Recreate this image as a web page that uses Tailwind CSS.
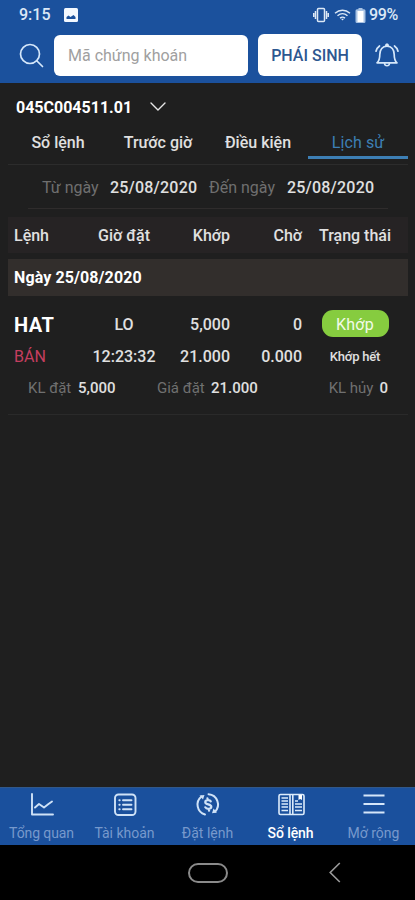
<!DOCTYPE html>
<html lang="vi">
<head>
    <meta charset="UTF-8">
    <meta name="viewport" content="width=device-width, initial-scale=1.0">
    <title>Sổ lệnh</title>
    <script src="https://cdn.jsdelivr.net/npm/@tailwindcss/browser@4"></script>
</head>
<body class="bg-[#1f1f1f] font-['Roboto',sans-serif] text-[#e0e0e0]">
    <div class="w-[415px] h-[900px] flex flex-col overflow-hidden">
        <header class="h-[83px] shrink-0 bg-[#1b519d]">
            <!-- Status bar -->
            <div class="h-[30px] flex items-center pl-[19px] pr-[18px] text-base font-medium text-[#dce8f6]">
                <span class="w-[45px]">9:15</span>
                <svg class="w-3.5 h-3.5" viewBox="0 0 14 14"><rect width="14" height="14" rx="1.500" fill="#f3f8ff"/><path d="M2.500 11V9l2-1.500 2 1.500L9.500 7l2 2v2z" fill="#1b519d"/></svg>
                <div class="ml-auto flex items-center">
                    <svg class="w-4 h-4" viewBox="0 0 16 16" fill="none" stroke="#dce8f6" stroke-width="1.500"><rect x="4.500" y="1.500" width="7" height="13" rx="1"/><path d="M2.500 4v8M.7 6v4M13.500 4v8M15.300 6v4"/></svg>
                    <svg class="w-[17px] h-3 ml-[5px]" viewBox="0 0 17 12" fill="none" stroke="#dce8f6" stroke-width="1.400"><path d="M1 4.200c4.500-4 10.500-4 15 0M3.500 6.800c3-2.600 7-2.600 10 0M6 9.100c1.500-1.200 3.500-1.200 5 0"/><path d="M7 9.800h3l-1.500 1.700z" fill="#dce8f6" stroke="none"/></svg>
                    <svg class="w-[11px] h-[15px] ml-1" viewBox="0 0 11 15"><path d="M3.500 0h4v1.200H9A1.500 1.500 0 0 1 10.500 2.700v10.800A1.500 1.500 0 0 1 9 15H2A1.500 1.500 0 0 1 .5 13.500V2.700A1.500 1.500 0 0 1 2 1.200h1.500z" fill="#a9c3e4"/><rect x="2.500" y="3" width="6" height="11" fill="#fff"/></svg>
                    <span class="ml-[3px] -mr-px tracking-[-0.3px]">99%</span>
                </div>
            </div>
            <!-- Search -->
            <div class="flex items-center pt-1">
                <svg class="w-[25px] h-[25px] ml-[19px] mr-2.5" viewBox="0 0 25 25" fill="none" stroke="#d5e7fa" stroke-width="1.700" stroke-linecap="round"><circle cx="11" cy="11" r="9.500"/><path d="M18 18l5.500 5.500"/></svg>
                <div class="w-[194px] h-[41px] flex items-center rounded-md bg-white pl-3.5 pt-0.5 text-base text-[#a0a0a0]">Mã chứng khoán</div>
                <div class="w-[104px] h-[42px] ml-2.5 flex items-center justify-center rounded-md bg-white pt-0.5 text-base font-medium text-[#2d5790]">PHÁI SINH</div>
                <svg class="w-6 h-[26px] ml-[13px]" viewBox="0 0 24 26" fill="none" stroke="#d5e7fa" stroke-width="1.700" stroke-linecap="round" stroke-linejoin="round"><path d="M2 20.800h20c-2-1.600-2.800-3.400-2.800-8.300 0-5-2.700-8.300-7.200-8.300s-7.200 3.300-7.200 8.300c0 4.900-.8 6.700-2.800 8.300zM10.800 3.800c0-2.200 2.400-2.200 2.400 0M9.500 21.500c.4 3 4.600 3 5 0M4.500 4C2.700 5.300 1.500 7 1 9.200M19.500 4c1.800 1.300 3 3 3.500 5.200"/></svg>
            </div>
        </header>

        <main class="flex-1 pl-2 pr-[7px]">
            <div class="h-[43px] flex items-center pl-2 pt-[7px]">
                <span class="w-[116px] text-base font-bold text-white">045C004511.01</span>
                <svg class="w-4 h-[9px] -mt-1 ml-[18px]" viewBox="0 0 16 9" fill="none" stroke="#e6e6e6" stroke-width="1.400" stroke-linecap="round"><path d="M1 1l7 7 7-7"/></svg>
            </div>
            <nav class="h-[39px] grid grid-cols-4 border-b border-[#2c2c2c] text-base font-medium text-center leading-[33px]">
                <div>Sổ lệnh</div>
                <div>Trước giờ</div>
                <div>Điều kiện</div>
                <div class="h-[33px] border-b-3 border-[#3d7fb5] font-normal tracking-[0.1px] text-[#3d7fb5]">Lịch sử</div>
            </nav>
            <div class="h-11 mx-5 flex items-center border-b border-[#2f2c2c] pl-3.5 pt-0.5 text-base">
                <span class="w-[68px] text-[#6f6f6f]">Từ ngày</span>
                <span class="w-[99px] tracking-[0.2px] font-medium">25/08/2020</span>
                <span class="w-[78px] whitespace-nowrap text-[#6f6f6f]">Đến ngày</span>
                <span class="tracking-[0.2px] font-medium">25/08/2020</span>
            </div>

            <!-- Orders -->
            <div class="h-9 mt-2 grid grid-cols-[70px_80px_66px_72px_106px] items-center bg-[#262324] pl-1.5 pt-px text-base font-medium">
                <span>Lệnh</span>
                <span class="text-center">Giờ đặt</span>
                <span class="text-right">Khớp</span>
                <span class="text-right">Chờ</span>
                <span class="text-center">Trạng thái</span>
            </div>
            <div class="h-[37px] mt-1.5 flex items-center bg-[#322e2c] pl-1.5 text-base font-bold tracking-[0.1px] text-white">Ngày 25/08/2020</div>
            <div class="h-[119px] border-b border-[#2a2a2a] pt-3 text-base font-medium">
                <div class="h-8 grid grid-cols-[70px_80px_66px_72px_106px] items-center pl-1.5 pt-px">
                    <span class="text-xl font-bold tracking-[0.5px] text-white">HAT</span>
                    <span class="text-center">LO</span>
                    <span class="text-right">5,000</span>
                    <span class="text-right">0</span>
                    <span class="w-[67px] h-[27px] -mt-0.5 mx-auto rounded-[11px] bg-[#86cc3f] text-center font-normal leading-[29px] tracking-[0.2px] text-[#f2fbe8]">Khớp</span>
                </div>
                <div class="h-8 grid grid-cols-[70px_80px_66px_72px_106px] items-center pl-1.5 pt-px">
                    <span class="font-normal text-[#c53e5f]">BÁN</span>
                    <span class="text-center">12:23:32</span>
                    <span class="text-right">21.000</span>
                    <span class="text-right">0.000</span>
                    <span class="text-center text-[13px] tracking-[-0.2px]">Khớp hết</span>
                </div>
                <div class="h-8 flex items-center pl-5 pr-5 text-[15px]">
                    <span class="w-[50px] font-normal text-[#707070]">KL đặt</span>
                    <span class="w-[79px]">5,000</span>
                    <span class="w-[54px] font-normal text-[#707070]">Giá đặt</span>
                    <span>21.000</span>
                    <span class="ml-auto mr-1.5 font-normal text-[#707070]">KL hủy</span>
                    <span>0</span>
                </div>
            </div>
        </main>

        <nav class="h-[58px] shrink-0 grid grid-cols-5 border-t border-[#31588a] bg-[#1a509d] pt-1 text-sm text-[#7799cc]">
            <div class="flex flex-col items-center gap-[5px]">
                <svg class="w-[26px] h-[26px]" viewBox="0 0 26 26" fill="none" stroke="#cfe2f7" stroke-width="1.900" stroke-linecap="round" stroke-linejoin="round"><path d="M3 2v20.500H24M6 15.500l4-3.500 5 3.500 4.500-3.500 3.500-2.500"/></svg>
                <span class="whitespace-nowrap tracking-[-0.1px]">Tổng quan</span>
            </div>
            <div class="flex flex-col items-center gap-[5px]">
                <svg class="w-[26px] h-[26px]" viewBox="0 0 26 26" fill="none" stroke="#cfe2f7" stroke-width="1.900" stroke-linecap="round"><rect x="3" y="2.500" width="20.500" height="20.500" rx="3.500"/><path d="M11 8.300h8.500M11 12.700h8.500M11 17.200h8.500M7.300 8.300h.4M7.300 12.700h.4M7.300 17.200h.4"/></svg>
                <span class="whitespace-nowrap">Tài khoản</span>
            </div>
            <div class="flex flex-col items-center gap-[5px]">
                <svg class="w-[26px] h-[26px]" viewBox="0 0 26 26" fill="none" stroke="#cfe2f7" stroke-width="2" stroke-linecap="round"><path d="M6.500 4.500A10.300 10.300 0 0 0 10 22.500M13.500 2.200a10.300 10.300 0 0 1 6.500 17.500"/><path d="M4.500 3.500l5-.5-1.500 4.500zM22 20.500l-5 .8 1.500-4.800z" fill="#cfe2f7" stroke="none"/><path d="M15.800 9.300c-1.200-1.900-5.700-1.400-5.500 1 .2 2.600 6 1.600 6 4.400 0 2.600-4.800 2.700-6 .6M12.400 6.300l.5 1.700M13.700 17l.4 1.700" stroke-width="2.200"/></svg>
                <span class="whitespace-nowrap">Đặt lệnh</span>
            </div>
            <div class="flex flex-col items-center gap-[5px] text-white">
                <svg class="w-7 h-[26px]" viewBox="0 0 28 26" fill="none" stroke="#dcebfb" stroke-width="1.600"><rect x="2" y="2.500" width="25" height="20" rx="1.500"/><path d="M13 3v19M15.800 3v19"/><path d="M4.500 6h6.500M4.500 9h6.500M4.500 12h6.500M4.500 15h6.500M4.500 18.500h6.500M18 9h3M18 12h7M18 15h7M18 18.500h7" stroke-width="1.300"/><path d="M21.500 3h3.500v5l-1.800-1L21.500 8z" fill="#fff" stroke="none"/></svg>
                <span class="whitespace-nowrap font-medium tracking-[-0.1px]">Sổ lệnh</span>
            </div>
            <div class="flex flex-col items-center gap-[5px]">
                <svg class="w-[26px] h-[26px]" viewBox="0 0 26 26" stroke="#d5e6f9" stroke-width="1.900"><path d="M2.500 3.500h21M2.500 12h21M2.500 20.500h21"/></svg>
                <span class="whitespace-nowrap">Mở rộng</span>
            </div>
        </nav>

        <!-- System navigation -->
        <div class="h-[55px] shrink-0 flex items-center bg-black">
            <div class="w-10 h-5 ml-[188px] rounded-full border-2 border-[#8a8a8a]"></div>
            <svg class="w-3 h-[21px] ml-[101px]" viewBox="0 0 12 21" fill="none" stroke="#9a9a9a" stroke-width="1.600"><path d="M10.800 1L1.200 10.500l9.600 9.500"/></svg>
        </div>
    </div>
</body>
</html>
